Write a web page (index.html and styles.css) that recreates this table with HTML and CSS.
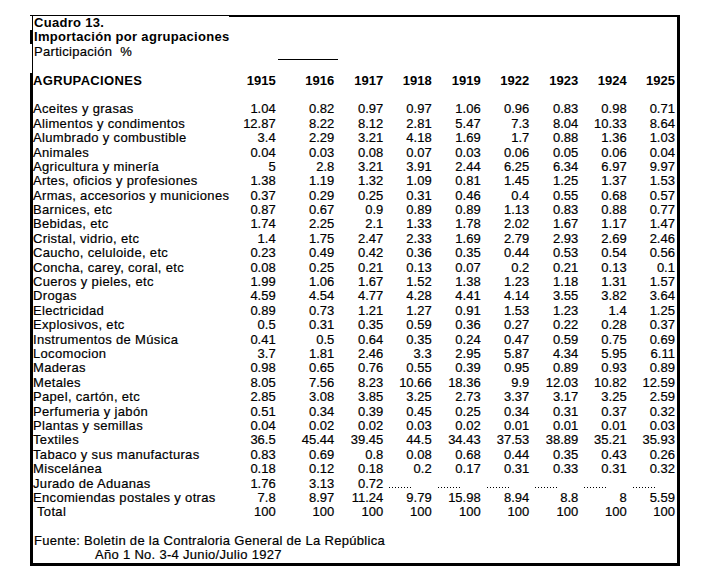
FILE: index.html
```html
<!DOCTYPE html>
<html lang="es">
<head>
<meta charset="utf-8">
<title>Cuadro 13</title>
<link rel="stylesheet" href="styles.css">
</head>
<body>
<div class="frame">
  <div class="title bold">Cuadro 13.</div>
  <div class="title bold">Importación por agrupaciones</div>
  <div class="title">Participación &nbsp;%</div>
  <div class="spacer"><div class="rule"></div></div>
  <div class="row head">
    <div class="label">AGRUPACIONES</div>
    <div>1915</div><div>1916</div><div>1917</div><div>1918</div><div>1919</div><div>1922</div><div>1923</div><div>1924</div><div>1925</div>
  </div>
  <div class="spacer"></div>
  <div class="row"><div class="label">Aceites y grasas</div><div>1.04</div><div>0.82</div><div>0.97</div><div>0.97</div><div>1.06</div><div>0.96</div><div>0.83</div><div>0.98</div><div>0.71</div></div>
  <div class="row"><div class="label">Alimentos y condimentos</div><div>12.87</div><div>8.22</div><div>8.12</div><div>2.81</div><div>5.47</div><div>7.3</div><div>8.04</div><div>10.33</div><div>8.64</div></div>
  <div class="row"><div class="label">Alumbrado y combustible</div><div>3.4</div><div>2.29</div><div>3.21</div><div>4.18</div><div>1.69</div><div>1.7</div><div>0.88</div><div>1.36</div><div>1.03</div></div>
  <div class="row"><div class="label">Animales</div><div>0.04</div><div>0.03</div><div>0.08</div><div>0.07</div><div>0.03</div><div>0.06</div><div>0.05</div><div>0.06</div><div>0.04</div></div>
  <div class="row"><div class="label">Agricultura y minería</div><div>5</div><div>2.8</div><div>3.21</div><div>3.91</div><div>2.44</div><div>6.25</div><div>6.34</div><div>6.97</div><div>9.97</div></div>
  <div class="row"><div class="label">Artes, oficios y profesiones</div><div>1.38</div><div>1.19</div><div>1.32</div><div>1.09</div><div>0.81</div><div>1.45</div><div>1.25</div><div>1.37</div><div>1.53</div></div>
  <div class="row"><div class="label">Armas, accesorios y municiones</div><div>0.37</div><div>0.29</div><div>0.25</div><div>0.31</div><div>0.46</div><div>0.4</div><div>0.55</div><div>0.68</div><div>0.57</div></div>
  <div class="row"><div class="label">Barnices, etc</div><div>0.87</div><div>0.67</div><div>0.9</div><div>0.89</div><div>0.89</div><div>1.13</div><div>0.83</div><div>0.88</div><div>0.77</div></div>
  <div class="row"><div class="label">Bebidas, etc</div><div>1.74</div><div>2.25</div><div>2.1</div><div>1.33</div><div>1.78</div><div>2.02</div><div>1.67</div><div>1.17</div><div>1.47</div></div>
  <div class="row"><div class="label">Cristal, vidrio, etc</div><div>1.4</div><div>1.75</div><div>2.47</div><div>2.33</div><div>1.69</div><div>2.79</div><div>2.93</div><div>2.69</div><div>2.46</div></div>
  <div class="row"><div class="label">Caucho, celuloide, etc</div><div>0.23</div><div>0.49</div><div>0.42</div><div>0.36</div><div>0.35</div><div>0.44</div><div>0.53</div><div>0.54</div><div>0.56</div></div>
  <div class="row"><div class="label">Concha, carey, coral, etc</div><div>0.08</div><div>0.25</div><div>0.21</div><div>0.13</div><div>0.07</div><div>0.2</div><div>0.21</div><div>0.13</div><div>0.1</div></div>
  <div class="row"><div class="label">Cueros y pieles, etc</div><div>1.99</div><div>1.06</div><div>1.67</div><div>1.52</div><div>1.38</div><div>1.23</div><div>1.18</div><div>1.31</div><div>1.57</div></div>
  <div class="row"><div class="label">Drogas</div><div>4.59</div><div>4.54</div><div>4.77</div><div>4.28</div><div>4.41</div><div>4.14</div><div>3.55</div><div>3.82</div><div>3.64</div></div>
  <div class="row"><div class="label">Electricidad</div><div>0.89</div><div>0.73</div><div>1.21</div><div>1.27</div><div>0.91</div><div>1.53</div><div>1.23</div><div>1.4</div><div>1.25</div></div>
  <div class="row"><div class="label">Explosivos, etc</div><div>0.5</div><div>0.31</div><div>0.35</div><div>0.59</div><div>0.36</div><div>0.27</div><div>0.22</div><div>0.28</div><div>0.37</div></div>
  <div class="row"><div class="label">Instrumentos de Música</div><div>0.41</div><div>0.5</div><div>0.64</div><div>0.35</div><div>0.24</div><div>0.47</div><div>0.59</div><div>0.75</div><div>0.69</div></div>
  <div class="row"><div class="label">Locomocion</div><div>3.7</div><div>1.81</div><div>2.46</div><div>3.3</div><div>2.95</div><div>5.87</div><div>4.34</div><div>5.95</div><div>6.11</div></div>
  <div class="row"><div class="label">Maderas</div><div>0.98</div><div>0.65</div><div>0.76</div><div>0.55</div><div>0.39</div><div>0.95</div><div>0.89</div><div>0.93</div><div>0.89</div></div>
  <div class="row"><div class="label">Metales</div><div>8.05</div><div>7.56</div><div>8.23</div><div>10.66</div><div>18.36</div><div>9.9</div><div>12.03</div><div>10.82</div><div>12.59</div></div>
  <div class="row"><div class="label">Papel, cartón, etc</div><div>2.85</div><div>3.08</div><div>3.85</div><div>3.25</div><div>2.73</div><div>3.37</div><div>3.17</div><div>3.25</div><div>2.59</div></div>
  <div class="row"><div class="label">Perfumeria y jabón</div><div>0.51</div><div>0.34</div><div>0.39</div><div>0.45</div><div>0.25</div><div>0.34</div><div>0.31</div><div>0.37</div><div>0.32</div></div>
  <div class="row"><div class="label">Plantas y semillas</div><div>0.04</div><div>0.02</div><div>0.02</div><div>0.03</div><div>0.02</div><div>0.01</div><div>0.01</div><div>0.01</div><div>0.03</div></div>
  <div class="row"><div class="label">Textiles</div><div>36.5</div><div>45.44</div><div>39.45</div><div>44.5</div><div>34.43</div><div>37.53</div><div>38.89</div><div>35.21</div><div>35.93</div></div>
  <div class="row"><div class="label">Tabaco y sus manufacturas</div><div>0.83</div><div>0.69</div><div>0.8</div><div>0.08</div><div>0.68</div><div>0.44</div><div>0.35</div><div>0.43</div><div>0.26</div></div>
  <div class="row"><div class="label">Miscelánea</div><div>0.18</div><div>0.12</div><div>0.18</div><div>0.2</div><div>0.17</div><div>0.31</div><div>0.33</div><div>0.31</div><div>0.32</div></div>
  <div class="row"><div class="label">Jurado de Aduanas</div><div>1.76</div><div>3.13</div><div>0.72</div><div class="dots"><span></span></div><div class="dots"><span></span></div><div class="dots"><span></span></div><div class="dots"><span></span></div><div class="dots"><span></span></div><div class="dots"><span></span></div></div>
  <div class="row"><div class="label">Encomiendas postales y otras</div><div>7.8</div><div>8.97</div><div>11.24</div><div>9.79</div><div>15.98</div><div>8.94</div><div>8.8</div><div>8</div><div>5.59</div></div>
  <div class="row"><div class="label total">Total</div><div>100</div><div>100</div><div>100</div><div>100</div><div>100</div><div>100</div><div>100</div><div>100</div><div>100</div></div>
  <div class="spacer"></div>
  <div class="title">Fuente: Boletin de la Contraloria General de La República</div>
  <div class="title indent">Año 1 No. 3-4 Junio/Julio 1927</div>
</div>
</body>
</html>
```

FILE: styles.css
```css
html, body {
  margin: 0;
  padding: 0;
  background: #fff;
}

body {
  font-family: "Liberation Sans", Arial, sans-serif;
  font-size: 13px;
  line-height: 14.4px;
  color: #000;
  -webkit-text-stroke: 0.2px #000;
}

.frame {
  position: relative;
  margin: 15px 0 0 30px;
  width: 644px;
  border-top: 1px solid #000;
  border-left: 3px solid #000;
  border-right: 3px solid #000;
  border-bottom: 3px solid #000;
}

.frame::before {
  content: "";
  position: absolute;
  top: -1px;
  left: 196px;
  right: -3px;
  height: 2px;
  background: #000;
}

.frame::after {
  content: "";
  position: absolute;
  top: 0;
  left: -3px;
  width: 2px;
  height: 57px;
  background: linear-gradient(to bottom, #fff 0 14px, transparent 14px 28px, #fff 28px 57px);
}

.title {
  height: 14.4px;
  padding-left: 1px;
  letter-spacing: 0.3px;
  white-space: nowrap;
}

.bold {
  font-weight: bold;
  -webkit-text-stroke: 0;
}

.indent {
  padding-left: 62px;
}

.spacer {
  height: 14.4px;
}

.rule {
  width: 60px;
  margin-left: 245px;
  border-top: 1px solid #000;
}

.row {
  display: grid;
  grid-template-columns: 200px 42.7px 58.6px 49px 48.4px 49px 48.6px 49px 48.4px 48.3px;
  height: 14.4px;
  text-align: right;
  white-space: nowrap;
}

.row .label {
  text-align: left;
  letter-spacing: 0.33px;
}

.row .total {
  padding-left: 4px;
}

.head {
  font-weight: bold;
  -webkit-text-stroke: 0;
}

.dots {
  text-align: left !important;
  padding-left: 6px;
}

.dots span {
  display: inline-block;
  width: 24px;
  height: 1px;
  background: repeating-linear-gradient(to right, #000 0 1px, transparent 1px 3px);
}
```
